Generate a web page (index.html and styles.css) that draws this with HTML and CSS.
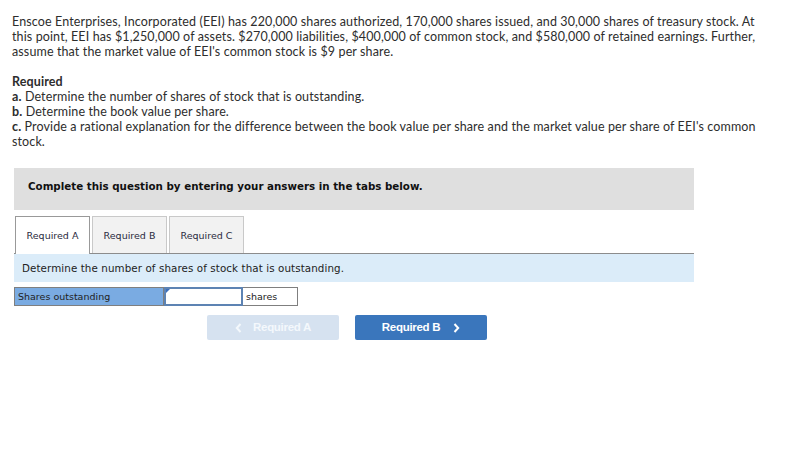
FILE: index.html
```html
<!DOCTYPE html>
<html>
<head>
<meta charset="utf-8">
<link rel="stylesheet" href="styles.css">
</head>
<body>
<div class="page">
  <p class="intro">Enscoe Enterprises, Incorporated (EEI) has 220,000 shares authorized, 170,000 shares issued, and 30,000 shares of treasury stock. At this point, EEI has $1,250,000 of assets. $270,000 liabilities, $400,000 of common stock, and $580,000 of retained earnings. Further, assume that the market value of EEI's common stock is $9 per share.</p>
  <div class="req">
    <div class="req-title">Required</div>
    <div><b>a.</b> Determine the number of shares of stock that is outstanding.</div>
    <div><b>b.</b> Determine the book value per share.</div>
    <div><b>c.</b> <span>Provide a rational explanation for the difference between the book value per share and the market value per share of EEI's common</span><br><span>stock.</span></div>
  </div>
  <div class="panel">
    <div class="banner">Complete this question by entering your answers in the tabs below.</div>
    <div class="tabs">
      <div class="tab active">Required A</div>
      <div class="tab">Required B</div>
      <div class="tab">Required C</div>
    </div>
    <div class="instr">Determine the number of shares of stock that is outstanding.</div>
    <div class="row">
      <div class="cell label">Shares outstanding</div>
      <div class="cell input"><span class="flag"></span></div>
      <div class="cell unit">shares</div>
    </div>
    <div class="nav">
      <div class="btn disabled"><svg class="chev left" width="7" height="10" viewBox="0 0 7 10"><path d="M5.5 1 L1.8 5 L5.5 9" fill="none" stroke="currentColor" stroke-width="2"/></svg>Required A</div>
      <div class="btn primary">Required B<svg class="chev right" width="7" height="10" viewBox="0 0 7 10"><path d="M1.5 1 L5.2 5 L1.5 9" fill="none" stroke="currentColor" stroke-width="2"/></svg></div>
    </div>
  </div>
</div>
</body>
</html>
```
FILE: styles.css
```css
html, body { margin: 0; padding: 0; background: #fff; }
.page {
  padding: 14px 12px 0 12px;
  font-family: "Lato", "Open Sans", sans-serif;
  font-size: 12.5px;
  line-height: 15px;
  letter-spacing: 0.12px;
  color: #2d2d2d;
}
.intro { margin: 0 0 15px 0; width: 752px; }
.req { width: 760px; }
.req-title { font-weight: bold; }
.req b { font-weight: bold; }

.panel { margin-top: 19px; margin-left: 2px; width: 680px; font-family: "DejaVu Sans", Verdana, sans-serif; letter-spacing: 0; }
.banner {
  box-sizing: border-box;
  background: #dfdfdf;
  height: 42px;
  display: flex;
  align-items: center;
  padding: 0 0 5px 14px;
  font-weight: bold;
  font-size: 10.3px;
  color: #111;
}
.tabs { display: flex; gap: 2px; margin-top: 6px; padding-left: 1px; border-bottom: 1px solid #8c8c8c; }
.tab {
  width: 73px;
  height: 36px;
  border: 1px solid #c9c9c9;
  border-bottom: none;
  background: #f2f2f2;
  display: flex;
  align-items: center;
  justify-content: center;
  font-size: 9.5px;
  color: #2a2a40;
  margin-bottom: -1px;
  box-sizing: content-box;
}
.tab.active { background: #fff; border-color: #999; height: 37px; width: 73px; }
.instr {
  background: #dbecf9;
  height: 28px;
  display: flex;
  align-items: center;
  padding-left: 8px;
  font-size: 10.3px;
  color: #222;
  letter-spacing: 0.1px;
}
.row { display: flex; margin-top: 5px; height: 19px; }
.cell { box-sizing: border-box; height: 19px; font-size: 9.5px; display: flex; align-items: center; }
.label { width: 150px; background: #7aabe2; border: 1px solid #7f7f7f; padding-left: 3px; color: #222; }
.input { width: 79px; background: #fff; border: 2px solid #5d83b3; position: relative; }
.flag {
  position: absolute; left: 0; top: 0;
  width: 0; height: 0;
  border-top: 4px solid #3b6fbd;
  border-right: 4px solid transparent;
}
.unit { width: 55px; border: 1px solid #7f7f7f; border-left: none; padding-left: 3px; color: #222; }

.nav { display: flex; gap: 16px; margin-top: 9px; padding-left: 193px; }
.btn {
  width: 132px; height: 25px;
  border-radius: 2px;
  display: flex; align-items: center; justify-content: center;
  font-family: "Liberation Sans", Arial, sans-serif;
  font-weight: bold; font-size: 11.5px;
  color: #fff;
  letter-spacing: -0.3px;
}
.btn.disabled { background: #d6e2f0; color: #f4f8fc; }
.btn.primary { background: #3a76bc; }
.chev { display: block; }
.chev.left { margin-right: 11px; }
.chev.right { margin-left: 13px; }
```
